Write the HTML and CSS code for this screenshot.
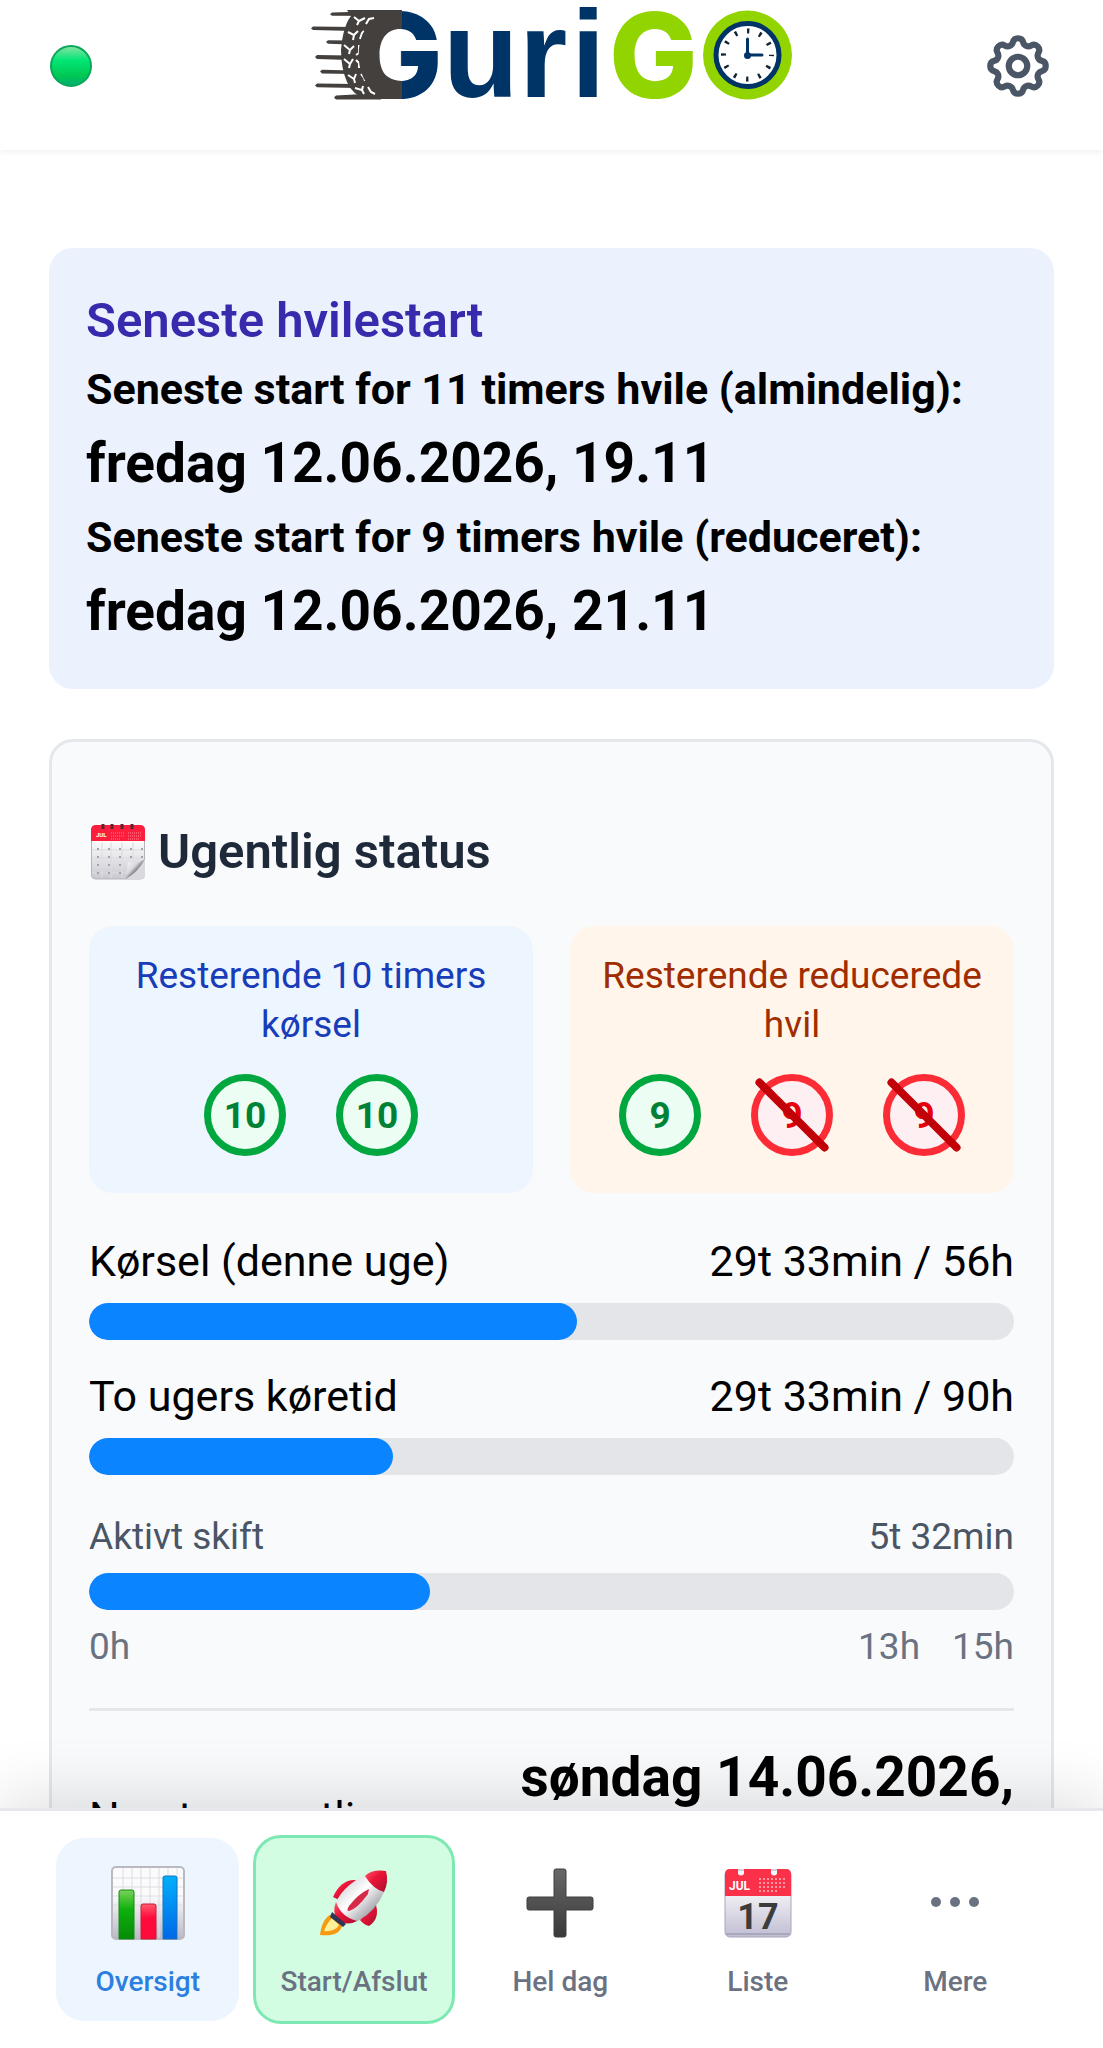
FILE: index.html
```html
<!DOCTYPE html>
<html lang="da">
<head>
<meta charset="utf-8">
<meta name="viewport" content="width=device-width, initial-scale=1">
<title>GuriGO</title>
<link rel="stylesheet" href="styles.css">
</head>
<body>
<div class="app">
  <header class="header">
    <span class="online" role="img" aria-label="Online"></span>
    <svg class="logo" viewBox="310 0 482 132" role="img" aria-label="GuriGO">
      <defs>
        <linearGradient id="tyre" gradientUnits="userSpaceOnUse" x1="340" y1="0" x2="440" y2="0">
          <stop offset="0.61" stop-color="#44403e"/>
          <stop offset="0.61" stop-color="#003467"/>
        </linearGradient>
      </defs>
      <g fill="#44403e">
        <path d="M346 10H401V27A27 27 0 0 0 401 81V99H366Q352 96 346 82Q340 68 340 50Q342 26 350 16Z"/>
        <path d="M329 14.200L331 12.500L401 10.500V16L331 15.800ZM310 28.500L312 26.500L352 27V31L312 30ZM325 42L327 40.200L350 40.500V44.500L327 43.800ZM314 57L316 55L348 55.500V60L316 59ZM319 71.500L321 69.700L352 70.500V74L321 73.500ZM314 85.500L316 83.500L356 84V88L316 87.300ZM333 97.500L335 95.500L380 93V99.500L335 99.500Z"/>
      </g>
      <path class="tread" d="M353 17L358 21L356 25M358 21L364 18M365 24L368 19L373 18M347 32L353 35L352 40M353 35L357 31M359 39L361 33L363 31M343 45L349 50L348 54M349 50L353 46M355 55L358 53V45M343 59L349 64L348 68M349 64L352 59M355 60L358 63V68M347 75L353 79L354 83M353 79L355 74M360 74L363 78L364 81M354 88L361 90L363 94M361 90L362 86M367 87L370 92L374 94"/>
      <text class="initial" x="353" y="98" fill="url(#tyre)">G</text>
      <text class="letters" x="442 518 570" y="97" fill="#003467">uri</text>
      <text class="initial" x="608" y="98" fill="#92d400">G</text>
      <circle cx="746.500" cy="55" r="44.500" fill="#92d400"/>
      <circle cx="746.500" cy="55" r="31.500" fill="#fff" stroke="#003467" stroke-width="5"/>
      <circle cx="746.500" cy="55" r="24" fill="none" stroke="#123" stroke-width="5" stroke-dasharray="2.400 10.166" stroke-dashoffset="1.200"/>
      <path d="M746.500 39V55H761" fill="none" stroke="#003467" stroke-width="3" stroke-linecap="round" stroke-linejoin="round"/>
      <circle cx="746.500" cy="55.500" r="3.500" fill="#003467"/>
    </svg>
    <button class="settings" type="button" aria-label="Indstillinger">
      <svg viewBox="0 0 24 24" width="74" height="74" fill="none" stroke="#4a5565" stroke-width="2" stroke-linecap="round" stroke-linejoin="round">
        <path d="M10.325 4.317c.426-1.756 2.924-1.756 3.350 0a1.724 1.724 0 0 0 2.573 1.066c1.543-.94 3.310.826 2.370 2.370a1.724 1.724 0 0 0 1.065 2.572c1.756.426 1.756 2.924 0 3.350a1.724 1.724 0 0 0-1.066 2.573c.94 1.543-.826 3.310-2.370 2.370a1.724 1.724 0 0 0-2.572 1.065c-.426 1.756-2.924 1.756-3.350 0a1.724 1.724 0 0 0-2.573-1.066c-1.543.94-3.310-.826-2.370-2.370a1.724 1.724 0 0 0-1.065-2.572c-1.756-.426-1.756-2.924 0-3.350a1.724 1.724 0 0 0 1.066-2.573c-.94-1.543.826-3.310 2.370-2.370.996.608 2.296.07 2.572-1.065z"/>
        <circle cx="12" cy="12" r="3"/>
      </svg>
    </button>
  </header>

  <main class="content">
    <section class="rest">
      <h2 class="rest-title">Seneste hvilestart</h2>
      <p class="rest-label">Seneste start for 11 timers hvile (almindelig):</p>
      <p class="rest-time">fredag 12.06.2026, 19.11</p>
      <p class="rest-label">Seneste start for 9 timers hvile (reduceret):</p>
      <p class="rest-time">fredag 12.06.2026, 21.11</p>
    </section>

    <section class="status">
      <h2 class="status-title">
        <svg class="status-icon" viewBox="0 0 54 56" aria-hidden="true">
          <defs>
            <linearGradient id="page" x1="0" y1="0" x2="0" y2="1"><stop offset="0.300" stop-color="#fafafa"/><stop offset="1" stop-color="#c9c8d0"/></linearGradient>
            <linearGradient id="curl" x1="0" y1="0" x2="1" y2="1"><stop offset="0" stop-color="#fff"/><stop offset="0.400" stop-color="#d8d8dd"/><stop offset="0.550" stop-color="#85858d"/></linearGradient>
          </defs>
          <rect x="0.500" y="2" width="53" height="53" rx="4" fill="url(#page)" stroke="#b5b4bd"/>
          <path d="M0 17V6Q0 1 5 1H49Q54 1 54 6V17Z" fill="#fb1f3d"/>
          <path d="M12 0V5M21 0V5M31 0V5M41 0V5" stroke="#5c2530" stroke-width="3"/>
          <text class="tiny-month" x="5" y="13">JUL</text>
          <path d="M20 9H33M20 12H33M20 15H30M37 9H51M37 12H51M37 15H49" stroke="#ff8592" stroke-dasharray="1 1"/>
          <path d="M11 18V54M20 18V54M31 18V54M42 18V54M1 26H53M1 34H53M1 42H53M1 49H40" stroke="#dcdbe1"/>
          <path d="M6 25H52M6 33H52M6 41H36M6 49H36" stroke="#a3a1aa" stroke-width="2" stroke-dasharray="2 9"/>
          <path d="M54 35V51Q54 55 50 55H35Z" fill="#d9d9de"/>
          <path d="M54 35Q47 40 37 38L35 55Q47 48 54 35Z" fill="url(#curl)"/>
        </svg>
        <span>Ugentlig status</span>
      </h2>

      <div class="quotas">
        <div class="quota quota-drive">
          <p class="quota-label">Resterende 10 timers kørsel</p>
          <div class="tokens">
            <span class="token">10</span>
            <span class="token">10</span>
          </div>
        </div>
        <div class="quota quota-rest">
          <p class="quota-label">Resterende reducerede hvil</p>
          <div class="tokens">
            <span class="token">9</span>
            <span class="token token-used">9</span>
            <span class="token token-used">9</span>
          </div>
        </div>
      </div>

      <div class="meter">
        <div class="meter-row"><span>Kørsel (denne uge)</span><span>29t 33min / 56h</span></div>
        <div class="bar"><div class="fill" style="width:52.77%"></div></div>
      </div>
      <div class="meter">
        <div class="meter-row"><span>To ugers køretid</span><span>29t 33min / 90h</span></div>
        <div class="bar"><div class="fill" style="width:32.83%"></div></div>
      </div>
      <div class="shift">
        <div class="shift-row"><span>Aktivt skift</span><span>5t 32min</span></div>
        <div class="bar"><div class="fill" style="width:36.89%"></div></div>
        <div class="shift-row shift-scale"><span>0h</span><span class="shift-limits"><span>13h</span><span>15h</span></span></div>
      </div>

      <div class="next">
        <span class="next-label">Næste ugentlige</span>
        <strong class="next-time">søndag 14.06.2026,</strong>
      </div>
    </section>
  </main>

  <nav class="tabs" aria-label="Menu">
    <button class="tab tab-active" type="button">
      <svg class="tab-icon" viewBox="0 0 74 74" aria-hidden="true">
        <defs>
          <linearGradient id="paper" x1="0" y1="0" x2="0" y2="1"><stop offset="0.400" stop-color="#fbfbfc"/><stop offset="1" stop-color="#b9b8c6"/></linearGradient>
          <linearGradient id="green" x1="0" y1="0" x2="0" y2="1"><stop offset="0" stop-color="#7ad257"/><stop offset="0.400" stop-color="#0db00d"/><stop offset="1" stop-color="#078a07"/></linearGradient>
          <linearGradient id="red" x1="0" y1="0" x2="0" y2="1"><stop offset="0" stop-color="#ff5a6c"/><stop offset="0.400" stop-color="#ff0a3c"/></linearGradient>
          <linearGradient id="blue" x1="0" y1="0" x2="0" y2="1"><stop offset="0" stop-color="#00b0fb"/><stop offset="1" stop-color="#0067e8"/></linearGradient>
        </defs>
        <rect x="1" y="1" width="72" height="72" rx="4" fill="url(#paper)" stroke="#bab9c2" stroke-width="2"/>
        <path d="M12 2V72M21 2V72M30 2V72M39 2V72M48 2V72M57 2V72M66 2V72M2 12H72M2 21H72M2 30H72M2 39H72M2 48H72" stroke="#dddce3"/>
        <path d="M8 73V26Q8 24 10 24H21Q23 24 23 26V73Z" fill="url(#green)" stroke="#168a16"/>
        <path d="M30 73V40Q30 38 32 38H43Q45 38 45 40V73Z" fill="url(#red)" stroke="#c91a3a"/>
        <path d="M52 73V12Q52 10 54 10H64Q66 10 66 12V73Z" fill="url(#blue)" stroke="#1675bd"/>
      </svg>
      <span>Oversigt</span>
    </button>
    <button class="tab tab-start" type="button">
      <svg class="tab-icon" viewBox="0 0 74 74" aria-hidden="true">
        <defs>
          <linearGradient id="hull" x1="0" y1="0" x2="1" y2="1"><stop offset="0.200" stop-color="#d9d9de"/><stop offset="0.450" stop-color="#fff"/><stop offset="0.800" stop-color="#9b9ba3"/></linearGradient>
          <linearGradient id="nose" x1="0" y1="0" x2="1" y2="1"><stop offset="0" stop-color="#ff5a6b"/><stop offset="0.400" stop-color="#ec1438"/><stop offset="1" stop-color="#a80f2c"/></linearGradient>
        </defs>
        <path d="M15 48Q5 52 3 69Q22 71 25 60Z" fill="#f79a10"/>
        <path d="M15 52Q10 57 7 65Q18 66 22 59Z" fill="#fff09a"/>
        <path d="M39 14Q24 13 16 31L22 34Z" fill="url(#nose)"/>
        <path d="M58 36Q64 52 52 60Q47 59 43 54Z" fill="url(#nose)"/>
        <path d="M19 36Q28 18 49 9L67 26Q59 45 41 55Q26 60 20 51Q16 44 19 36Z" fill="url(#hull)"/>
        <path d="M48 10Q55 3 69 5Q72 16 67 26Q56 23 48 10Z" fill="url(#nose)"/>
        <path d="M19 36Q24 51 40 55Q29 61 20 53Q15 46 19 36Z" fill="url(#nose)"/>
        <path d="M52 23Q41 28 32 40Q29 45 32 45Q40 43 51 28Z" fill="#d72a48"/>
        <path d="M15 46L29 58L26 61L13 51Z" fill="#2e3555"/>
      </svg>
      <span>Start/Afslut</span>
    </button>
    <button class="tab" type="button">
      <svg class="tab-icon" viewBox="0 0 74 74" aria-hidden="true">
        <defs><linearGradient id="plus" x1="0" y1="0" x2="0" y2="1"><stop offset="0" stop-color="#686868"/><stop offset="1" stop-color="#393939"/></linearGradient></defs>
        <path d="M33 3H41Q43 3 43 5V31H68Q70 31 70 33V42Q70 44 68 44H43V69Q43 71 41 71H33Q31 71 31 69V44H6Q4 44 4 42V33Q4 31 6 31H31V5Q31 3 33 3Z" fill="url(#plus)" stroke="#3f3f3f"/>
      </svg>
      <span>Hel dag</span>
    </button>
    <button class="tab" type="button">
      <svg class="tab-icon" viewBox="0 0 74 74" aria-hidden="true">
        <defs><linearGradient id="sheet" x1="0" y1="0" x2="0" y2="1"><stop offset="0.300" stop-color="#f6f5f8"/><stop offset="1" stop-color="#bfbdd2"/></linearGradient></defs>
        <rect x="4" y="4" width="66" height="67" rx="5" fill="url(#sheet)" stroke="#a9a7bb"/>
        <path d="M4 30V8Q4 3 9 3H17V8Q20 11 23 8V3H50V8Q53 11 56 8V3H65Q70 3 70 8V30Z" fill="#fb3149"/>
        <path d="M38 13H66M38 17H66M38 21H66M38 25H58" stroke="#ff98a3" stroke-width="2" stroke-dasharray="2 2"/>
        <text class="month" x="8" y="24">JUL</text>
        <text class="day" x="37" y="63">17</text>
        <path d="M5 68H69" stroke="#a9a7bb" stroke-width="2"/>
      </svg>
      <span>Liste</span>
    </button>
    <button class="tab" type="button">
      <svg class="tab-icon" viewBox="0 0 74 74" fill="#6a7282" aria-hidden="true">
        <circle cx="18" cy="36" r="5"/><circle cx="37" cy="36" r="5"/><circle cx="56" cy="36" r="5"/>
      </svg>
      <span>Mere</span>
    </button>
  </nav>
</div>
</body>
</html>
```
FILE: styles.css
```css
* {
  box-sizing: border-box;
}

body {
  margin: 0;
  background: #fff;
  color: #000;
  font-family: Roboto, "Liberation Sans", sans-serif;
  font-size: 43px;
  line-height: 66px;
}

h2,
p {
  margin: 0;
}

button {
  border: 0;
  padding: 0;
  background: none;
  font: inherit;
  cursor: pointer;
}

svg {
  display: block;
}

.app {
  display: flex;
  flex-direction: column;
  height: 100vh;
}

.header {
  display: grid;
  grid-template-columns: 1fr auto 1fr;
  align-items: center;
  padding: 0 48px 18px;
  background: #fff;
  box-shadow: 0 2px 6px rgba(0, 0, 0, 0.06);
  z-index: 1;
}

.online {
  width: 42px;
  height: 42px;
  margin-left: 2px;
  border: 2px solid #0ca65a;
  border-radius: 50%;
  background: linear-gradient(#7fe3a0, #00e676 35%, #00c853 75%, #00b070);
}

.logo {
  width: 482px;
  height: 132px;
  overflow: visible;
}

.initial {
  font-family: Inter, "Liberation Sans", sans-serif;
  font-size: 118px;
  font-weight: 800;
}

.letters {
  font-family: "Liberation Sans", Arial, sans-serif;
  font-size: 124px;
  font-weight: 700;
}

.tread {
  fill: none;
  stroke: #fff;
  stroke-width: 2px;
}

.settings {
  justify-self: end;
}

.content {
  flex: 1;
  min-height: 0;
  overflow-y: auto;
  scrollbar-width: none;
  padding: 98px 49px 48px;
}

.rest {
  padding: 38px 37px 37px;
  border-radius: 24px;
  background: #ecf1fe;
}

.rest-title {
  color: #372aac;
  font-size: 49px;
  font-weight: 600;
  line-height: 70px;
}

.rest-label {
  font-weight: 700;
}

.rest-time {
  font-size: 55px;
  font-weight: 700;
  line-height: 82px;
}

.status {
  margin-top: 50px;
  padding: 75px 37px 37px;
  border: 3px solid #e5e7eb;
  border-radius: 24px;
  background: #f9fafc;
}

.status-title {
  display: flex;
  align-items: center;
  gap: 13px;
  padding-left: 2px;
  color: #1e2939;
  font-size: 49px;
  font-weight: 600;
  line-height: 69px;
}

.status-icon {
  width: 54px;
  height: 56px;
}

.tiny-month {
  fill: #fff;
  font-size: 6px;
  font-weight: 700;
}

.quotas {
  display: grid;
  grid-template-columns: 1fr 1fr;
  gap: 37px;
  margin: 40px 0 34px;
}

.quota {
  padding: 25px 24px 37px;
  border-radius: 24px;
  font-size: 37px;
  line-height: 49px;
  text-align: center;
}

.quota-drive {
  background: #edf5ff;
  color: #193cb8;
}

.quota-rest {
  background: #fff5ea;
  color: #9f2d00;
}

.tokens {
  display: flex;
  justify-content: center;
  gap: 50px;
  margin-top: 25px;
}

.token {
  position: relative;
  display: flex;
  align-items: center;
  justify-content: center;
  width: 82px;
  height: 82px;
  border: 7px solid #00a63e;
  border-radius: 50%;
  background: #ecfdf3;
  color: #008236;
  font-weight: 700;
}

.token-used {
  border-color: #fb2c36;
  background: #fef0f2;
  color: #e7000b;
}

.token-used::after {
  content: "";
  position: absolute;
  top: 30px;
  left: -16px;
  width: 100px;
  height: 8px;
  border-radius: 4px;
  background: #c10007;
  transform: rotate(45deg);
}

.meter {
  margin-bottom: 22px;
}

.meter-row,
.shift-row {
  display: flex;
  justify-content: space-between;
}

.meter-row {
  margin-bottom: 8px;
  line-height: 68px;
}

.bar {
  overflow: hidden;
  height: 37px;
  border-radius: 19px;
  background: #e4e5e9;
}

.fill {
  height: 100%;
  border-radius: 19px;
  background: #0b84ff;
}

.shift {
  display: flex;
  flex-direction: column;
  gap: 12px;
  margin-top: 37px;
  color: #4a5565;
  font-size: 37px;
  line-height: 49px;
}

.shift-scale {
  color: #6a7282;
}

.shift-limits {
  display: flex;
  gap: 32px;
}

.next {
  display: flex;
  align-items: flex-start;
  justify-content: space-between;
  margin-top: 37px;
  padding-top: 28px;
  border-top: 3px solid #e5e7eb;
}

.next-label {
  padding-top: 45px;
}

.next-time {
  font-size: 55px;
  font-weight: 700;
  line-height: 77px;
}

.tabs {
  display: flex;
  align-items: center;
  gap: 14px;
  padding: 24px 56px;
  border-top: 3px solid #e5e7eb;
  background: #fff;
  box-shadow: 0 -10px 60px rgba(0, 0, 0, 0.13);
  z-index: 1;
}

.tab {
  flex: 1 1 0;
  display: flex;
  flex-direction: column;
  align-items: center;
  gap: 22px;
  padding: 28px 24px 19px;
  border-radius: 28px;
  color: #6a7282;
  font-size: 28px;
  font-weight: 500;
  line-height: 40px;
}

.tab-active {
  background: #edf5ff;
  color: #2b7fdf;
}

.tab-start {
  border: 3px solid #7ee8b2;
  background: #d2fde3;
}

.tab-icon {
  width: 74px;
  height: 74px;
}

.month {
  fill: #fff;
  font-size: 12px;
  font-weight: 700;
}

.day {
  fill: #3c3c3c;
  font-size: 36px;
  font-weight: 700;
  text-anchor: middle;
}
```
